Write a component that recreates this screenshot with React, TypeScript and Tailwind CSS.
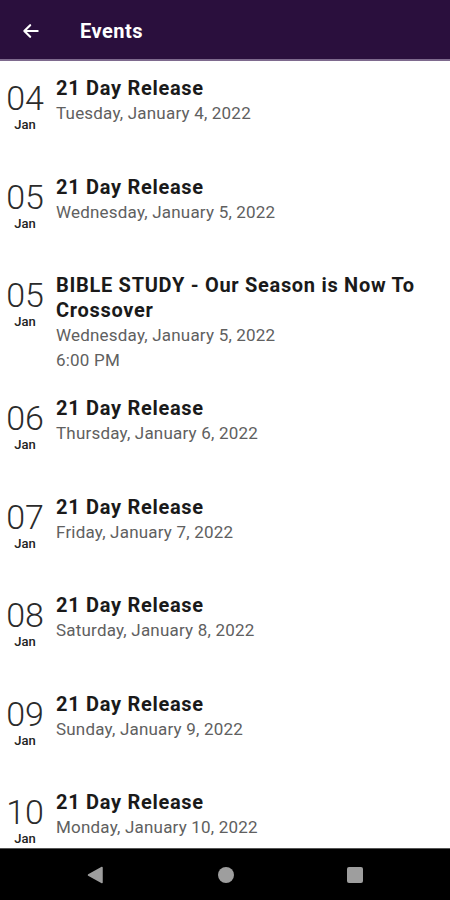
import React from "react";

type EventItem = {
  day: string;
  month: string;
  title: string;
  date: string;
  time?: string;
};

const events: EventItem[] = [
  { day: "04", month: "Jan", title: "21 Day Release", date: "Tuesday, January 4, 2022" },
  { day: "05", month: "Jan", title: "21 Day Release", date: "Wednesday, January 5, 2022" },
  {
    day: "05",
    month: "Jan",
    title: "BIBLE STUDY - Our Season is Now To Crossover",
    date: "Wednesday, January 5, 2022",
    time: "6:00 PM",
  },
  { day: "06", month: "Jan", title: "21 Day Release", date: "Thursday, January 6, 2022" },
  { day: "07", month: "Jan", title: "21 Day Release", date: "Friday, January 7, 2022" },
  { day: "08", month: "Jan", title: "21 Day Release", date: "Saturday, January 8, 2022" },
  { day: "09", month: "Jan", title: "21 Day Release", date: "Sunday, January 9, 2022" },
  { day: "10", month: "Jan", title: "21 Day Release", date: "Monday, January 10, 2022" },
];

const EventRow = ({ item }: { item: EventItem }) => (
  <div className="flex min-h-[98.5px] pt-[15px] pb-2">
    <div className="flex w-[50px] shrink-0 flex-col items-center pt-[5px]">
      <span className="text-[34px] font-light leading-[34px] text-[#2b2b2b]">{item.day}</span>
      <span className="mt-[2px] text-[13px] font-medium leading-[16px] text-[#222]">{item.month}</span>
    </div>
    <div className="ml-[6px] flex flex-col pr-4">
      <span className="text-[20px] font-bold leading-[25px] tracking-[0.7px] text-[#1a1a1a]">{item.title}</span>
      <span className="text-[17px] leading-[25px] tracking-[0.2px] text-[#606060]">{item.date}</span>
      {item.time && (
        <span className="text-[17px] leading-[25px] tracking-[0.2px] text-[#606060]">{item.time}</span>
      )}
    </div>
  </div>
);

export default function App() {
  return (
    <div className="flex h-[900px] w-[450px] flex-col overflow-hidden bg-white font-['Roboto',sans-serif]">
      <header className="flex h-[61px] shrink-0 items-center border-b-2 border-[#7e6a8e] bg-[#2a0f3d] pt-[2px]">
        <svg className="ml-[21px] h-5 w-5" viewBox="0 0 24 24" fill="none" stroke="white" strokeWidth={2.6} strokeLinecap="round" strokeLinejoin="round">
          <path d="M20 12H4M11 5l-7 7 7 7" />
        </svg>
        <h1 className="ml-[39px] text-[20px] font-bold tracking-[0.5px] text-white">Events</h1>
      </header>

      <main className="flex-1 overflow-hidden">
        {events.map((item, i) => (
          <EventRow key={i} item={item} />
        ))}
      </main>

      <nav className="flex h-[52px] shrink-0 items-center border-t border-[#555] bg-black">
        <svg className="ml-[87px] h-[18px] w-[16px]" viewBox="0 0 16 18">
          <path d="M15 1.5v15L1.5 9z" fill="#9e9e9e" stroke="#9e9e9e" strokeLinejoin="round" strokeWidth={1.5} />
        </svg>
        <span className="ml-[115px] h-[16px] w-[16px] rounded-full bg-[#9e9e9e]" />
        <span className="ml-[113px] h-[16px] w-[16px] rounded-[2px] bg-[#9e9e9e]" />
      </nav>
    </div>
  );
}
